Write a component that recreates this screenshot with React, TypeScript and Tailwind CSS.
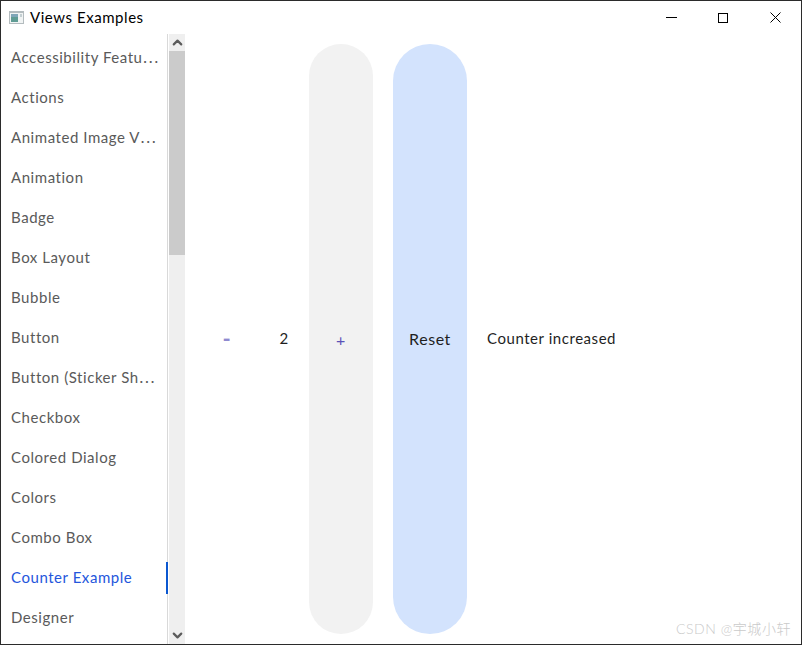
import { ChevronDown, ChevronUp } from "lucide-react";

const examples = [
  "Accessibility Featu⋯",
  "Actions",
  "Animated Image V⋯",
  "Animation",
  "Badge",
  "Box Layout",
  "Bubble",
  "Button",
  "Button (Sticker Sh⋯",
  "Checkbox",
  "Colored Dialog",
  "Colors",
  "Combo Box",
  "Counter Example",
  "Designer",
];

function AppIcon() {
  return (
    <svg width="16" height="16" viewBox="0 0 16 16" className="shrink-0">
      <rect x="0" y="1" width="15" height="13" fill="#b4bcbf" />
      <rect x="1" y="3" width="13" height="10" fill="#f1f4f4" />
      <rect x="2" y="4" width="7" height="8" fill="#5f9c94" />
      <rect x="2" y="4" width="7" height="3" fill="#7fa6b8" />
      <rect x="11" y="4" width="2" height="3" fill="#c4cfd2" />
    </svg>
  );
}

function TitleBar() {
  return (
    <div className="flex h-[33px] items-center pl-2">
      <AppIcon />
      <span className="ml-[5px] pb-px text-[15px] text-black">Views Examples</span>
      <div className="ml-auto flex h-full">
        <button className="flex w-[52px] items-center justify-center">
          <span className="h-px w-[11px] bg-black" />
        </button>
        <button className="flex w-[52px] items-center justify-center">
          <span className="h-[10px] w-[10px] border border-black" />
        </button>
        <button className="flex w-[52px] items-center justify-center">
          <svg width="11" height="11" viewBox="0 0 11 11" stroke="black" fill="none">
            <path d="M0.5 0.5L10.5 10.5M10.5 0.5L0.5 10.5" />
          </svg>
        </button>
      </div>
    </div>
  );
}

function Sidebar() {
  return (
    <div className="flex h-full w-[184px] shrink-0">
      <ul className="h-full w-[167px] border-r border-[#d9d9d9] pt-1">
        {examples.map((name) => {
          const active = name === "Counter Example";
          return (
            <li
              key={name}
              className={`relative flex h-10 items-center pl-[10px] text-[15px] ${
                active ? "text-[#2456dc]" : "text-[#5a5a5a]"
              }`}
            >
              <span className="whitespace-nowrap pb-[2px]">{name}</span>
              {active && <span className="absolute -right-px top-1 h-8 w-[2px] bg-[#0b57d0]" />}
            </li>
          );
        })}
      </ul>
      <div className="ml-px flex h-full w-4 flex-col bg-[#efefef]">
        <div className="flex h-[17px] items-center justify-center pb-px">
          <ChevronUp size={15} strokeWidth={3.5} color="#5c5c5c" />
        </div>
        <div className="h-[204px] bg-[#cbcbcb]" />
        <div className="mt-auto flex h-[17px] items-center justify-center">
          <ChevronDown size={15} strokeWidth={3.5} color="#5c5c5c" />
        </div>
      </div>
    </div>
  );
}

function Counter() {
  return (
    <div className="flex h-full items-stretch gap-5 py-[10px] pl-[10px] text-[15px]">
      <button className="flex w-16 items-center justify-center rounded-[32px] text-[22px] font-bold leading-none text-[#8f8ad0]">-</button>
      <span className="flex w-[10px] items-center justify-center pb-px text-[#1f1f1f]">2</span>
      <button className="flex w-16 items-center justify-center rounded-[32px] bg-[#f2f2f2] pt-px text-[16px] text-[#5b52b8]">+</button>
      <button className="flex w-[74px] items-center justify-center rounded-[37px] bg-[#d3e3fd] pb-px text-base text-[#1f1f1f]">
        Reset
      </button>
      <span className="flex items-center whitespace-nowrap pb-px text-[#1f1f1f]">Counter increased</span>
    </div>
  );
}

export default function App() {
  return (
    <div className="relative flex h-[645px] w-[802px] flex-col overflow-hidden border border-[#2b2b2b] bg-white font-['Lato','Noto_Sans_CJK_SC',sans-serif] font-normal tracking-[0.55px]">
      <TitleBar />
      <div className="flex min-h-0 flex-1">
        <Sidebar />
        <div className="min-w-0 flex-1">
          <Counter />
        </div>
      </div>
      <span className="absolute bottom-[5px] right-[10px] text-sm font-light text-[#cacaca]">
        CSDN @宇城小轩
      </span>
    </div>
  );
}
